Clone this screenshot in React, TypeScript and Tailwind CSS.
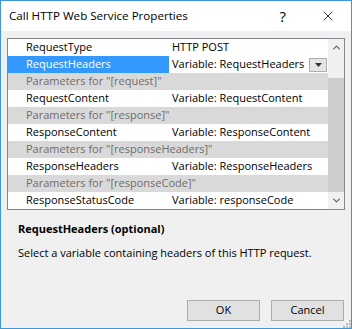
import { ChevronUp, ChevronDown, X } from 'lucide-react';

type Row = { kind: 'prop'; name: string; value: string; selected?: boolean; dropdown?: boolean } | { kind: 'group'; label: string };

const rows: Row[] = [
  { kind: 'prop', name: 'RequestType', value: 'HTTP POST' },
  { kind: 'prop', name: 'RequestHeaders', value: 'Variable: RequestHeaders', selected: true, dropdown: true },
  { kind: 'group', label: 'Parameters for "[request]"' },
  { kind: 'prop', name: 'RequestContent', value: 'Variable: RequestContent' },
  { kind: 'group', label: 'Parameters for "[response]"' },
  { kind: 'prop', name: 'ResponseContent', value: 'Variable: ResponseContent' },
  { kind: 'group', label: 'Parameters for "[responseHeaders]"' },
  { kind: 'prop', name: 'ResponseHeaders', value: 'Variable: ResponseHeaders' },
  { kind: 'group', label: 'Parameters for "[responseCode]"' },
  { kind: 'prop', name: 'ResponseStatusCode', value: 'Variable: responseCode' },
];

function GridRow({ row }: { row: Row }) {
  if (row.kind === 'group') {
    return (
      <div className="h-[17px] bg-[#d9d9d9] pl-[18px] flex items-center text-[#6d6d6d] whitespace-nowrap overflow-hidden">
        {row.label}
      </div>
    );
  }
  return (
    <div className="h-[17px] flex bg-white whitespace-nowrap">
      <div
        className={
          row.selected
            ? 'w-[161px] shrink-0 bg-[#3399ff] text-white pl-[18px] flex items-center'
            : 'w-[161px] shrink-0 pl-[18px] flex items-center'
        }
      >
        {row.name}
      </div>
      <div className="flex-1 pl-[3px] flex items-center justify-between pr-[1px]">
        <span>{row.value}</span>
        {row.dropdown && (
          <div className="w-[18px] h-[14px] border border-[#adadad] bg-[#e5e5e5] flex items-center justify-center">
            <svg width="7" height="4" viewBox="0 0 7 4">
              <path d="M0 0h7L3.5 4z" fill="#333" />
            </svg>
          </div>
        )}
      </div>
    </div>
  );
}

export default function App() {
  return (
    <div
      className="w-[352px] h-[329px] border border-[#3b97d9] flex flex-col text-[11px] text-black"
      style={{ fontFamily: '"Open Sans", "Noto Sans", sans-serif' }}
    >
      <div className="h-[30px] bg-white flex items-center pl-[8px] shrink-0">
        <span className="text-[11.6px] flex-1 whitespace-nowrap">Call HTTP Web Service Properties</span>
        <span className="text-[15px] mr-[34px]">?</span>
        <X size={16} strokeWidth={1.2} className="mr-[15px]" />
      </div>

      <div className="flex-1 bg-[#f0f0f0] flex flex-col px-[6px] pt-[7px]">
        <div className="border border-[#828790] flex bg-white">
          <div className="w-[320px]">
            {rows.map((r, i) => (
              <GridRow key={i} row={r} />
            ))}
          </div>
          <div className="w-[16px] bg-[#f0f0f0] flex flex-col items-center">
            <div className="h-[17px] flex items-center justify-center text-[#606060]">
              <ChevronUp size={11} strokeWidth={2.5} />
            </div>
            <div className="h-[22px]" />
            <div className="w-full h-[114px] bg-[#cdcdcd]" />
            <div className="flex-1 flex items-center justify-center text-[#606060]">
              <ChevronDown size={11} strokeWidth={2.5} />
            </div>
          </div>
        </div>

        <div className="pl-[11px] mt-[11px] font-bold">RequestHeaders (optional)</div>
        <div className="pl-[11px] mt-[7px] whitespace-nowrap">Select a variable containing headers of this HTTP request.</div>

        <div className="mt-auto mb-[7px] flex justify-end gap-[11px] pr-[1px] relative">
          <button className="w-[73px] h-[21px] border border-[#adadad] bg-[#e1e1e1]">OK</button>
          <button className="w-[73px] h-[21px] border border-[#adadad] bg-[#e1e1e1]">Cancel</button>
          <svg className="absolute right-[-6px] bottom-[-7px]" width="8" height="8" viewBox="0 0 8 8">
            <g fill="#b8b8b8">
              <rect x="6" y="0" width="2" height="2" />
              <rect x="3" y="3" width="2" height="2" />
              <rect x="6" y="3" width="2" height="2" />
              <rect x="0" y="6" width="2" height="2" />
              <rect x="3" y="6" width="2" height="2" />
              <rect x="6" y="6" width="2" height="2" />
            </g>
          </svg>
        </div>
      </div>
    </div>
  );
}
